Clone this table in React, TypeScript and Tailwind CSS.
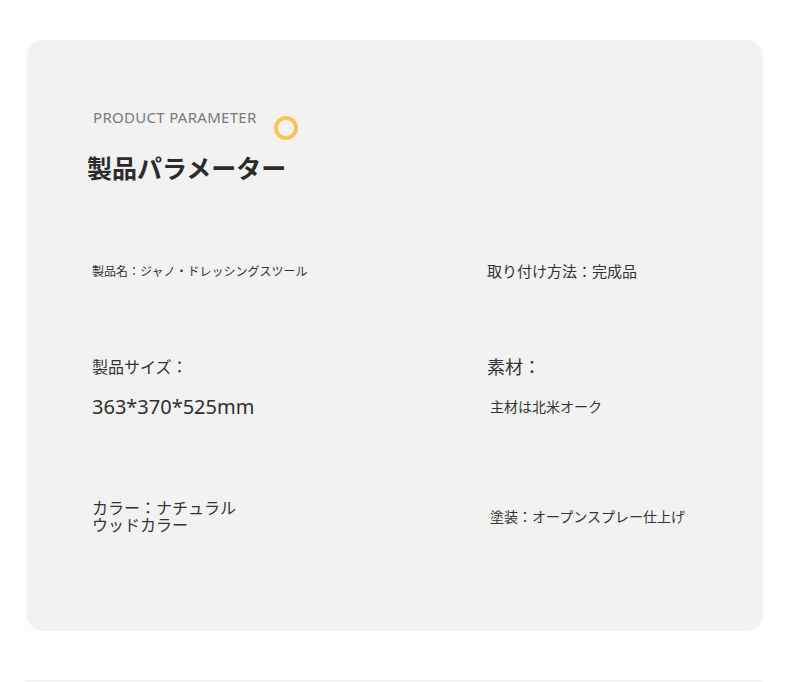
import React from "react";

const jp = { fontFamily: '"Noto Sans CJK JP", "Noto Sans", sans-serif' };

export default function App() {
  return (
    <div className="w-[790px] h-[682px] bg-[#fdfdfd] overflow-hidden" style={jp}>
      <div className="pt-[40px] px-[27px]">
        <div className="h-[591px] rounded-[16px] bg-[#f2f2f2] pl-[64px] pt-[67px] text-[#333]">
          {/* header */}
          <div className="relative w-[220px]">
            <p
              className="text-[15px] leading-[20px] tracking-[0.02em] text-[#7a7a7a] pl-[2px]"
              style={{ fontFamily: '"Noto Sans", "Open Sans", sans-serif' }}
            >
              PRODUCT PARAMETER
            </p>
            <span className="absolute left-[183px] top-[9px] w-[24px] h-[24px] rounded-full border-[4px] border-[#f6c55a]" />
            <h1 className="mt-[23px] -ml-[4px] text-[25px] leading-[34px] font-bold text-[#2b2b2b]">
              製品パラメーター
            </h1>
          </div>

          {/* parameters */}
          <div className="flex items-start mt-[78px]">
            <div className="w-[396px] pl-[1px]">
              <p className="text-[12px] leading-[18px]">製品名：ジャノ・ドレッシングスツール</p>
              <p className="mt-[75px] text-[16px] leading-[22px]">製品サイズ：</p>
              <p
                className="mt-[17px] text-[20px] leading-[26px] text-[#2f2f2f]"
                style={{ fontFamily: '"Noto Sans", sans-serif' }}
              >
                363*370*525mm
              </p>
              <div className="mt-[79px] text-[16px] leading-[17px]">
                <p>カラー：ナチュラル</p>
                <p>ウッドカラー</p>
              </div>
            </div>
            <div className="-mt-[1px]">
              <p className="text-[15px] leading-[20px]">取り付け方法：完成品</p>
              <p className="mt-[74px] text-[18px] leading-[22px]">素材：</p>
              <p className="mt-[19px] pl-[3px] text-[14px] leading-[20px]">主材は北米オーク</p>
              <p className="mt-[90px] pl-[3px] text-[14px] leading-[20px]">塗装：オープンスプレー仕上げ</p>
            </div>
          </div>
        </div>
        <div className="mt-[49px] border-t border-[#f0f0f0]" />
      </div>
    </div>
  );
}
